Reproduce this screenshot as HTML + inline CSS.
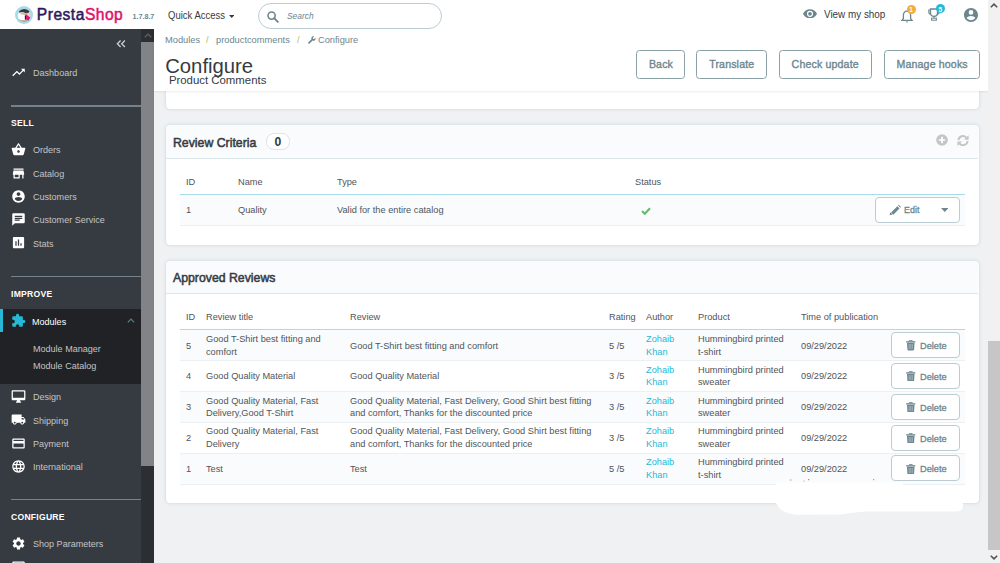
<!DOCTYPE html>
<html><head><meta charset="utf-8"><title>Configure - Product Comments</title>
<style>
html,body{margin:0;padding:0;width:1000px;height:563px;overflow:hidden;background:#eff1f2;font-family:"Liberation Sans",sans-serif;}
.r{position:absolute;box-sizing:content-box;}
.t{position:absolute;white-space:nowrap;}
</style></head><body>
<div class="r" style="left:153.5px;top:29px;width:834px;height:534px;background:#eff1f2;"></div>
<div class="r" style="left:0px;top:0px;width:987.5px;height:29px;background:#fff;"></div>
<svg class="r" style="left:15.1px;top:5.8px" width="18" height="18" viewBox="0 0 18 18">
<defs><clipPath id="lc"><circle cx="9.3" cy="9.4" r="6.5"/></clipPath></defs>
<circle cx="9" cy="9" r="9" fill="#a8dbe8"/>
<g clip-path="url(#lc)">
<rect x="0" y="0" width="18" height="18" fill="#d6d6d6"/>
<ellipse cx="9" cy="4.6" rx="6.2" ry="2.9" fill="#3a3b3d"/>
<path d="M2.8 8 C5 5.8 9 6 10.8 7.6 L10.6 14.6 L2.5 14.6 Z" fill="#ffffff"/>
<path d="M5.5 7.2 C7.2 6.4 9.4 6.7 10.6 7.8 L10.2 9.2 C8.8 8.4 7 8.3 5.6 8.6 Z" fill="#bdbdbd"/>
<path d="M10.4 7.1 L11.8 6.8 L11.6 9.4 L10.5 9.6 Z" fill="#f0b43c"/>
<path d="M10.6 8 L15.6 11.8 L13 14.6 L10.4 13.2 Z" fill="#e5177b"/>
<path d="M9.8 9.6 L10.9 9.4 L11 13.6 L9.9 13.8 Z" fill="#1e1e1e"/>
<rect x="2" y="14.2" width="14" height="4" fill="#bda486"/>
<circle cx="4.4" cy="14.3" r="0.9" fill="#333"/><circle cx="13.8" cy="14.3" r="0.9" fill="#333"/>
</g>
</svg>
<div class="t" style="left:36.8px;top:5.05px;font-size:15.6px;line-height:20.28px;color:#363a41;letter-spacing:0.5px;"><span style="color:#2a1a5e;-webkit-text-stroke:0.5px #2a1a5e">Presta</span><span style="color:#e0106c;-webkit-text-stroke:0.5px #e0106c">Shop</span></div>
<div class="t" style="left:132.4px;top:12.33px;font-size:7.2px;line-height:9.36px;color:#6c868e;font-weight:700;">1.7.8.7</div>
<div class="t" style="left:168.1px;top:8.67px;font-size:10.165px;line-height:13.21px;color:#363a41;transform:scaleX(0.9346);transform-origin:0 0;">Quick Access</div>
<svg class="r" style="left:228.5px;top:14.5px" width="5.5" height="3"><path d="M0 0 L5.5 0 L2.75 3 Z" fill="#363a41"/></svg>
<div class="r" style="left:258px;top:3px;width:181.5px;height:23.5px;border:1px solid #bbcdd2;border-radius:13px;background:#fff"></div>
<svg class="r" style="left:267px;top:10.5px" width="12" height="12" viewBox="0 0 12 12">
<circle cx="4.6" cy="4.6" r="3.6" fill="none" stroke="#6c868e" stroke-width="1.6"/>
<path d="M7.2 7.2 L10.8 10.8" stroke="#6c868e" stroke-width="1.9" stroke-linecap="round"/></svg>
<div class="t" style="left:287px;top:11.43px;font-size:8.4px;line-height:10.92px;color:#6c868e;font-style:italic;">Search</div>
<svg class="r" style="left:802.7px;top:8.6px" width="14" height="9.6" viewBox="0 0 24 16">
<path d="M12 0 C6.5 0 2 3.5 0 8 C2 12.5 6.5 16 12 16 C17.5 16 22 12.5 24 8 C22 3.5 17.5 0 12 0 Z M12 13.3 A5.3 5.3 0 1 1 12 2.7 A5.3 5.3 0 1 1 12 13.3 Z M12 4.8 A3.2 3.2 0 1 0 12 11.2 A3.2 3.2 0 1 0 12 4.8 Z" fill="#6c868e"/></svg>
<div class="t" style="left:823.6px;top:8.44px;font-size:10.593px;line-height:13.77px;color:#363a41;transform:scaleX(0.9346);transform-origin:0 0;">View my shop</div>
<svg class="r" style="left:900.5px;top:9.5px" width="12" height="13" viewBox="0 0 12 13">
<path d="M6 1.2 C3.6 1.2 2.4 3 2.4 5.2 L2.4 8.6 L1 10.3 L11 10.3 L9.6 8.6 L9.6 5.2 C9.6 3 8.4 1.2 6 1.2 Z" fill="none" stroke="#6c868e" stroke-width="1.3"/>
<path d="M4.6 11.6 A1.5 1.5 0 0 0 7.4 11.6 Z" fill="#6c868e"/></svg>
<div class="r" style="left:906.5px;top:4.5px;width:9px;height:9px;border-radius:50%;background:#f0ae40"></div>
<div class="t" style="left:909.3px;top:6.22px;font-size:6.5px;line-height:8.45px;color:#fff;font-weight:700;">1</div>
<svg class="r" style="left:927.5px;top:8px" width="12" height="13" viewBox="0 0 12 13">
<path d="M2.5 1 L9.5 1 L9.5 5 C9.5 7.2 8 8.3 6 8.3 C4 8.3 2.5 7.2 2.5 5 Z" fill="none" stroke="#6c868e" stroke-width="1.3"/>
<path d="M2.5 2 L0.8 2 L0.8 4 C0.8 5.3 1.8 6 2.8 6 M9.5 2 L11.2 2 L11.2 4 C11.2 5.3 10.2 6 9.2 6" fill="none" stroke="#6c868e" stroke-width="1.1"/>
<path d="M6 8.3 L6 9.8" stroke="#6c868e" stroke-width="1.3"/><rect x="3.6" y="10.2" width="4.8" height="2" fill="none" stroke="#6c868e" stroke-width="1"/></svg>
<div class="r" style="left:936px;top:4px;width:9px;height:9px;border-radius:50%;background:#25b9d7"></div>
<div class="t" style="left:938.6px;top:5.72px;font-size:6.5px;line-height:8.45px;color:#fff;font-weight:700;">5</div>
<svg class="r" style="left:963.5px;top:7.7px" width="14" height="14" viewBox="0 0 24 24">
<path d="M12 0 C5.4 0 0 5.4 0 12 C0 18.6 5.4 24 12 24 C18.6 24 24 18.6 24 12 C24 5.4 18.6 0 12 0 Z M12 3.6 A4 4 0 1 1 12 11.6 A4 4 0 1 1 12 3.6 Z M12 21 C9 21 6.3 19.5 4.7 17.2 C4.8 14.8 9.5 13.5 12 13.5 C14.5 13.5 19.2 14.8 19.3 17.2 C17.7 19.5 15 21 12 21 Z" fill="#6c868e"/></svg>
<div class="r" style="left:0px;top:29px;width:153.5px;height:534px;background:#363a41;"></div>
<div class="r" style="left:141px;top:29px;width:12.5px;height:534px;background:#2b2e33;"></div>
<div class="r" style="left:141px;top:41.6px;width:12.5px;height:424px;background:#818386;"></div>
<svg class="r" style="left:143.5px;top:32.5px" width="8" height="5" viewBox="0 0 8 5"><path d="M0.8 4.3 L4 1.1 L7.2 4.3" fill="none" stroke="#5f6266" stroke-width="1.3"/></svg>
<svg class="r" style="left:116px;top:40.3px" width="10" height="8" viewBox="0 0 10 8"><path d="M4.6 0.6 L1.4 3.8 L4.6 7 M8.9 0.6 L5.7 3.8 L8.9 7" fill="none" stroke="#c9cacb" stroke-width="1.4"/></svg>
<svg class="r" style="left:10.5px;top:65px" width="15" height="15" viewBox="0 0 24 24"><path d="M16 6l2.29 2.29-4.88 4.88-4-4L2 16.59 3.41 18l6-6 4 4 6.3-6.29L22 12V6z" fill="#fff"/></svg>
<div class="t" style="left:32.8px;top:67.35px;font-size:9.684px;line-height:12.59px;color:#c4c5c7;transform:scaleX(0.9346);transform-origin:0 0;">Dashboard</div>
<div class="r" style="left:11px;top:105.2px;width:130px;height:1.5px;background:#74828a;"></div>
<div class="t" style="left:11px;top:117.63px;font-size:8.6px;line-height:11.18px;color:#fff;font-weight:700;letter-spacing:0.25px;">SELL</div>
<svg class="r" style="left:10.5px;top:142.20000000000002px" width="15" height="15" viewBox="0 0 24 24"><path d="M17.21 9l-4.38-6.56c-.19-.28-.51-.42-.83-.42-.32 0-.64.14-.83.43L6.79 9H2c-.55 0-1 .45-1 1 0 .09.01.18.04.27l2.54 9.27c.23.84 1 1.46 1.92 1.46h13c.92 0 1.69-.62 1.93-1.46l2.54-9.27L23 10c0-.55-.45-1-1-1h-4.79zM9 9l3-4.4L15 9H9zm3 8c-1.1 0-2-.9-2-2s.9-2 2-2 2 .9 2 2-.9 2-2 2z" fill="#fff"/></svg>
<div class="t" style="left:32.8px;top:144.45px;font-size:9.684px;line-height:12.59px;color:#c4c5c7;transform:scaleX(0.9346);transform-origin:0 0;">Orders</div>
<svg class="r" style="left:10.5px;top:165.50000000000003px" width="15" height="15" viewBox="0 0 24 24"><path d="M20 4H4v2h16V4zm1 10v-2l-1-5H4l-1 5v2h1v6h10v-6h4v6h2v-6h1zm-9 4H6v-4h6v4z" fill="#fff"/></svg>
<div class="t" style="left:32.8px;top:167.75px;font-size:9.684px;line-height:12.59px;color:#c4c5c7;transform:scaleX(0.9346);transform-origin:0 0;">Catalog</div>
<svg class="r" style="left:10.5px;top:188.8px" width="15" height="15" viewBox="0 0 24 24"><path d="M12 2C6.48 2 2 6.48 2 12s4.48 10 10 10 10-4.48 10-10S17.52 2 12 2zm0 3c1.66 0 3 1.34 3 3s-1.34 3-3 3-3-1.34-3-3 1.34-3 3-3zm0 14.2c-2.5 0-4.71-1.28-6-3.22.03-1.990 4-3.08 6-3.08 1.99 0 5.970 1.09 6 3.08-1.29 1.94-3.5 3.22-6 3.22z" fill="#fff"/></svg>
<div class="t" style="left:32.8px;top:191.05px;font-size:9.684px;line-height:12.59px;color:#c4c5c7;transform:scaleX(0.9346);transform-origin:0 0;">Customers</div>
<svg class="r" style="left:10.5px;top:212.10000000000002px" width="15" height="15" viewBox="0 0 24 24"><path d="M20 2H4c-1.1 0-1.99.9-1.99 2L2 22l4-4h14c1.1 0 2-.9 2-2V4c0-1.1-.9-2-2-2zM6 9h12v2H6V9zm8 5H6v-2h8v2zm4-6H6V6h12v2z" fill="#fff"/></svg>
<div class="t" style="left:32.8px;top:214.35px;font-size:9.684px;line-height:12.59px;color:#c4c5c7;transform:scaleX(0.9346);transform-origin:0 0;">Customer Service</div>
<svg class="r" style="left:10.5px;top:235.4px" width="15" height="15" viewBox="0 0 24 24"><path d="M19 3H5c-1.1 0-2 .9-2 2v14c0 1.1.9 2 2 2h14c1.1 0 2-.9 2-2V5c0-1.1-.9-2-2-2zM9 17H7v-7h2v7zm4 0h-2V7h2v10zm4 0h-2v-4h2v4z" fill="#fff"/></svg>
<div class="t" style="left:32.8px;top:237.65px;font-size:9.684px;line-height:12.59px;color:#c4c5c7;transform:scaleX(0.9346);transform-origin:0 0;">Stats</div>
<div class="r" style="left:11px;top:275.7px;width:130px;height:1.5px;background:#74828a;"></div>
<div class="t" style="left:11px;top:288.53px;font-size:8.6px;line-height:11.18px;color:#fff;font-weight:700;letter-spacing:0.25px;">IMPROVE</div>
<div class="r" style="left:0px;top:308.9px;width:141px;height:74.7px;background:#202226;"></div>
<div class="r" style="left:0px;top:308.9px;width:3px;height:23.1px;background:#25b9d7;"></div>
<svg class="r" style="left:10.5px;top:313.3px" width="15" height="15" viewBox="0 0 24 24"><path d="M20.5 11H19V7c0-1.1-.9-2-2-2h-4V3.5C13 2.12 11.88 1 10.5 1S8 2.12 8 3.5V5H4c-1.1 0-1.99.9-1.99 2v3.8H3.5c1.49 0 2.7 1.210 2.7 2.7s-1.21 2.7-2.7 2.7H2V20c0 1.1.9 2 2 2h3.8v-1.5c0-1.49 1.21-2.7 2.7-2.7 1.49 0 2.7 1.21 2.7 2.7V22H17c1.1 0 2-.9 2-2v-4h1.5c1.38 0 2.5-1.12 2.5-2.5S21.88 11 20.5 11z" fill="#25b9d7"/></svg>
<div class="t" style="left:32px;top:315.55px;font-size:9.684px;line-height:12.59px;color:#fff;transform:scaleX(0.9346);transform-origin:0 0;">Modules</div>
<svg class="r" style="left:126.5px;top:318px" width="8" height="5" viewBox="0 0 8 5"><path d="M0.8 4.3 L4 1.1 L7.2 4.3" fill="none" stroke="#5d7f88" stroke-width="1.2"/></svg>
<div class="t" style="left:32.8px;top:343.15px;font-size:9.684px;line-height:12.59px;color:#c4c5c7;transform:scaleX(0.9346);transform-origin:0 0;">Module Manager</div>
<div class="t" style="left:32.8px;top:360.35px;font-size:9.684px;line-height:12.59px;color:#c4c5c7;transform:scaleX(0.9346);transform-origin:0 0;">Module Catalog</div>
<svg class="r" style="left:10.5px;top:388.9px" width="15" height="15" viewBox="0 0 24 24"><path d="M21 2H3c-1.1 0-2 .9-2 2v12c0 1.1.9 2 2 2h7l-2 3v1h8v-1l-2-3h7c1.1 0 2-.9 2-2V4c0-1.1-.9-2-2-2zm0 12H3V4h18v10z" fill="#fff"/></svg>
<div class="t" style="left:32.8px;top:391.15px;font-size:9.684px;line-height:12.59px;color:#c4c5c7;transform:scaleX(0.9346);transform-origin:0 0;">Design</div>
<svg class="r" style="left:10.5px;top:412.25px" width="15" height="15" viewBox="0 0 24 24"><path d="M20 8h-3V4H3c-1.1 0-2 .9-2 2v11h2c0 1.66 1.34 3 3 3s3-1.34 3-3h6c0 1.66 1.34 3 3 3s3-1.34 3-3h2v-5l-3-4zM6 18.5c-.83 0-1.5-.67-1.5-1.5s.67-1.5 1.5-1.5 1.5.67 1.5 1.5-.67 1.5-1.5 1.5zm13.5-9l1.96 2.5H17V9.5h2.5zm-1.5 9c-.83 0-1.5-.67-1.5-1.5s.67-1.5 1.5-1.5 1.5.67 1.5 1.5-.67 1.5-1.5 1.5z" fill="#fff"/></svg>
<div class="t" style="left:32.8px;top:414.50px;font-size:9.684px;line-height:12.59px;color:#c4c5c7;transform:scaleX(0.9346);transform-origin:0 0;">Shipping</div>
<svg class="r" style="left:10.5px;top:435.59999999999997px" width="15" height="15" viewBox="0 0 24 24"><path d="M20 4H4c-1.11 0-1.99.89-1.99 2L2 18c0 1.11.89 2 2 2h16c1.11 0 2-.89 2-2V6c0-1.11-.89-2-2-2zm0 14H4v-6h16v6zm0-10H4V6h16v2z" fill="#fff"/></svg>
<div class="t" style="left:32.8px;top:437.85px;font-size:9.684px;line-height:12.59px;color:#c4c5c7;transform:scaleX(0.9346);transform-origin:0 0;">Payment</div>
<svg class="r" style="left:10.5px;top:458.95px" width="15" height="15" viewBox="0 0 24 24"><path d="M11.99 2C6.47 2 2 6.48 2 12s4.47 10 9.99 10C17.52 22 22 17.52 22 12S17.52 2 11.99 2zm6.93 6h-2.95c-.32-1.25-.78-2.45-1.38-3.56 1.84.63 3.37 1.91 4.33 3.56zM12 4.04c.83 1.2 1.48 2.53 1.91 3.96h-3.820c.43-1.43 1.08-2.76 1.91-3.96zM4.26 14C4.1 13.36 4 12.69 4 12s.1-1.36.26-2h3.38c-.08.66-.14 1.32-.14 2 0 .68.06 1.34.14 2H4.26zm.82 2h2.95c.32 1.25.78 2.45 1.38 3.56-1.84-.63-3.37-1.9-4.33-3.56zm2.95-8H5.08c.96-1.66 2.49-2.93 4.33-3.56C8.81 5.55 8.35 6.75 8.03 8zM12 19.96c-.83-1.2-1.48-2.53-1.91-3.96h3.82c-.43 1.43-1.08 2.76-1.91 3.96zM14.34 14H9.66c-.09-.66-.16-1.32-.16-2 0-.68.07-1.35.16-2h4.68c.09.65.16 1.32.16 2 0 .68-.07 1.34-.16 2zm.25 5.56c.6-1.11 1.06-2.31 1.38-3.56h2.95c-.96 1.65-2.49 2.93-4.33 3.56zM16.36 14c.08-.66.14-1.320.14-2 0-.68-.06-1.34-.14-2h3.38c.16.64.26 1.31.26 2s-.1 1.36-.26 2h-3.38z" fill="#fff"/></svg>
<div class="t" style="left:32.8px;top:461.20px;font-size:9.684px;line-height:12.59px;color:#c4c5c7;transform:scaleX(0.9346);transform-origin:0 0;">International</div>
<div class="r" style="left:11px;top:498.7px;width:130px;height:1.5px;background:#74828a;"></div>
<div class="t" style="left:11px;top:511.73px;font-size:8.6px;line-height:11.18px;color:#fff;font-weight:700;letter-spacing:0.25px;">CONFIGURE</div>
<svg class="r" style="left:10.5px;top:536px" width="15" height="15" viewBox="0 0 24 24"><path d="M19.14 12.94c.04-.3.06-.61.06-.94 0-.32-.02-.64-.07-.94l2.03-1.58c.18-.14.23-.41.12-.61l-1.92-3.32c-.12-.22-.37-.29-.59-.22l-2.39.96c-.5-.38-1.03-.7-1.62-.94l-.36-2.54c-.04-.24-.24-.41-.48-.41h-3.84c-.24 0-.43.17-.47.41l-.36 2.54c-.59.24-1.13.57-1.62.94l-2.39-.96c-.22-.08-.47 0-.59.22L2.74 8.87c-.12.21-.08.47.12.61l2.03 1.58c-.05.3-.09.63-.09.94s.02.64.07.94l-2.03 1.58c-.18.14-.23.41-.12.61l1.92 3.32c.12.22.37.29.59.22l2.39-.96c.5.38 1.03.7 1.62.94l.36 2.54c.05.24.24.41.48.41h3.84c.24 0 .44-.17.47-.41l.36-2.54c.59-.24 1.130-.56 1.62-.94l2.39.96c.22.08.47 0 .59-.22l1.92-3.32c.12-.22.07-.47-.12-.61l-2.01-1.58zM12 15.6c-1.98 0-3.6-1.62-3.6-3.6s1.62-3.6 3.6-3.6 3.6 1.62 3.6 3.6-1.62 3.6-3.6 3.6z" fill="#fff"/></svg>
<div class="t" style="left:32.8px;top:538.35px;font-size:9.684px;line-height:12.59px;color:#c4c5c7;transform:scaleX(0.9346);transform-origin:0 0;">Shop Parameters</div>
<svg class="r" style="left:10.5px;top:559px" width="15" height="15" viewBox="0 0 24 24"><path d="M20 4H4c-1.11 0-1.99.89-1.99 2L2 18c0 1.11.89 2 2 2h16c1.11 0 2-.89 2-2V6c0-1.11-.89-2-2-2zm0 14H4v-6h16v6zm0-10H4V6h16v2z" fill="#fff"/></svg>
<div class="r" style="left:165.3px;top:40px;width:812.3px;height:68.2px;border:1px solid #dbe6e9;border-radius:5px;background:#fff;box-shadow:0 0 4px rgba(0,0,0,0.06)"></div>
<div class="r" style="left:153.5px;top:29px;width:834px;height:62px;background:#fff;box-shadow:0 1px 2px rgba(0,0,0,0.07);"></div>
<div class="t" style="left:164.8px;top:33.78px;font-size:9.951px;line-height:12.94px;color:#6c868e;transform:scaleX(0.9346);transform-origin:0 0;">Modules</div>
<div class="t" style="left:206.3px;top:33.78px;font-size:9.951px;line-height:12.94px;color:#a4c45c;transform:scaleX(0.9346);transform-origin:0 0;">/</div>
<div class="t" style="left:216px;top:33.78px;font-size:9.951px;line-height:12.94px;color:#6c868e;transform:scaleX(0.9346);transform-origin:0 0;">productcomments</div>
<div class="t" style="left:296.6px;top:33.78px;font-size:9.951px;line-height:12.94px;color:#a4c45c;transform:scaleX(0.9346);transform-origin:0 0;">/</div>
<svg class="r" style="left:308px;top:36px" width="8" height="8" viewBox="0 0 16 16">
<path d="M15 3.5 L12.3 6.2 L9.8 6.2 L9.8 3.7 L12.5 1 C10.5 0.2 8 0.8 7 2.8 C6.3 4.2 6.5 5.5 7 6.5 L0.8 12.7 C0.2 13.3 0.2 14.4 0.8 15 C1.4 15.6 2.5 15.6 3.1 15 L9.3 8.8 C10.4 9.4 11.8 9.5 13.1 8.8 C15 7.8 15.6 5.5 15 3.5 Z" fill="#6c868e"/></svg>
<div class="t" style="left:317.8px;top:33.78px;font-size:9.951px;line-height:12.94px;color:#6c868e;transform:scaleX(0.9346);transform-origin:0 0;">Configure</div>
<div class="t" style="left:165.2px;top:52.97px;font-size:20.3px;line-height:26.39px;color:#363a41;">Configure</div>
<div class="t" style="left:168.9px;top:72.74px;font-size:11.4px;line-height:14.82px;color:#363a41;">Product Comments</div>
<div class="r" style="left:636.1px;top:49.8px;width:46.6px;height:26.8px;border:1px solid #8aa0a7;border-radius:3.5px;background:#fff"></div>
<div class="r" style="left:696.4px;top:49.8px;width:68.4px;height:26.8px;border:1px solid #8aa0a7;border-radius:3.5px;background:#fff"></div>
<div class="r" style="left:779.2px;top:49.8px;width:90.4px;height:26.8px;border:1px solid #8aa0a7;border-radius:3.5px;background:#fff"></div>
<div class="r" style="left:883.8px;top:49.8px;width:94.3px;height:26.8px;border:1px solid #8aa0a7;border-radius:3.5px;background:#fff"></div>
<div class="t" style="left:648.9px;top:57.94px;font-size:10.6px;line-height:13.78px;color:#6c868e;-webkit-text-stroke:0.35px currentColor;letter-spacing:0.15px;">Back</div>
<div class="t" style="left:709.2px;top:57.94px;font-size:10.6px;line-height:13.78px;color:#6c868e;-webkit-text-stroke:0.35px currentColor;letter-spacing:0.15px;">Translate</div>
<div class="t" style="left:791.6px;top:57.94px;font-size:10.6px;line-height:13.78px;color:#6c868e;-webkit-text-stroke:0.35px currentColor;letter-spacing:0.15px;">Check update</div>
<div class="t" style="left:896.5px;top:57.94px;font-size:10.6px;line-height:13.78px;color:#6c868e;-webkit-text-stroke:0.35px currentColor;letter-spacing:0.15px;">Manage hooks</div>
<div class="r" style="left:165.3px;top:124px;width:812.3px;height:120.19999999999999px;border:1px solid #dbe6e9;border-radius:5px;background:#fff;box-shadow:0 0 4px rgba(0,0,0,0.06)"></div>
<div class="r" style="left:166.3px;top:125px;width:811.7px;height:32.69999999999999px;border-bottom:1px solid #dbe6e9;border-radius:4px 4px 0 0;background:#fafbfc"></div>
<div class="t" style="left:173.2px;top:133.75px;font-size:13.5px;line-height:17.55px;color:#363a41;-webkit-text-stroke:0.55px currentColor;transform:scaleX(0.91);transform-origin:0 0;">Review Criteria</div>
<div class="r" style="left:266.2px;top:132.8px;width:21.8px;height:15.2px;border:1px solid #dbe6e9;border-radius:8px;background:#fff"></div>
<div class="t" style="left:274.4px;top:135.44px;font-size:12.2px;line-height:15.86px;color:#363a41;font-weight:700;">0</div>
<svg class="r" style="left:935.6px;top:134.2px" width="12" height="12" viewBox="0 0 12 12"><circle cx="6" cy="6" r="5.8" fill="#c5c5c5"/><path d="M6 2.8 V9.2 M2.8 6 H9.2" stroke="#fff" stroke-width="1.7"/></svg>
<svg class="r" style="left:957.3px;top:134.8px" width="12" height="11.2" viewBox="0 0 12 11.2"><path d="M1.4 5.2 A4.5 4.5 0 0 1 9.3 2.6" fill="none" stroke="#c5c5c5" stroke-width="1.9"/><path d="M11.6 0.2 L11.6 4.8 L7 4.8 Z" fill="#c5c5c5"/><path d="M10.6 6 A4.5 4.5 0 0 1 2.7 8.6" fill="none" stroke="#c5c5c5" stroke-width="1.9"/><path d="M0.4 11 L0.4 6.4 L5 6.4 Z" fill="#c5c5c5"/></svg>
<div class="t" style="left:186.1px;top:176.44px;font-size:9.898px;line-height:12.87px;color:#50555b;transform:scaleX(0.9346);transform-origin:0 0;">ID</div>
<div class="t" style="left:238.2px;top:176.44px;font-size:9.898px;line-height:12.87px;color:#50555b;transform:scaleX(0.9346);transform-origin:0 0;">Name</div>
<div class="t" style="left:337px;top:176.44px;font-size:9.898px;line-height:12.87px;color:#50555b;transform:scaleX(0.9346);transform-origin:0 0;">Type</div>
<div class="t" style="left:635.3px;top:176.44px;font-size:9.898px;line-height:12.87px;color:#50555b;transform:scaleX(0.9346);transform-origin:0 0;">Status</div>
<div class="r" style="left:180.2px;top:193.8px;width:784.4px;height:1.4px;background:#a9dbea;"></div>
<div class="r" style="left:180.2px;top:195.2px;width:784.4px;height:30.2px;background:#f9fbfc;"></div>
<div class="r" style="left:180.2px;top:225px;width:784.4px;height:1px;background:#ebf0f2;"></div>
<div class="t" style="left:186.1px;top:203.84px;font-size:9.898px;line-height:12.87px;color:#50555b;transform:scaleX(0.9346);transform-origin:0 0;">1</div>
<div class="t" style="left:237.7px;top:203.84px;font-size:9.898px;line-height:12.87px;color:#50555b;transform:scaleX(0.9346);transform-origin:0 0;">Quality</div>
<div class="t" style="left:337px;top:203.84px;font-size:9.898px;line-height:12.87px;color:#50555b;transform:scaleX(0.9346);transform-origin:0 0;">Valid for the entire catalog</div>
<svg class="r" style="left:640.5px;top:206.5px" width="10" height="8" viewBox="0 0 10 8"><path d="M1 4 L3.8 6.8 L9 1.2" fill="none" stroke="#62bb6b" stroke-width="2"/></svg>
<div class="r" style="left:875.2px;top:197px;width:83px;height:23.5px;border:1px solid #bbcdd2;border-radius:4px;background:#fff"></div>
<svg class="r" style="left:889px;top:204px" width="12" height="11.5" viewBox="0 0 12 11.5"><path d="M3.2 9.6 L9.4 3.4" stroke="#6c868e" stroke-width="3"/><path d="M10.2 2.6 L10.9 1.9" stroke="#6c868e" stroke-width="3"/><path d="M0.6 11.2 L1.2 8.2 L3.6 10.6 Z" fill="#6c868e"/></svg>
<div class="t" style="left:903.5px;top:204.23px;font-size:9.7px;line-height:12.61px;color:#6c868e;-webkit-text-stroke:0.3px currentColor;transform:scaleX(0.92);transform-origin:0 0;">Edit</div>
<svg class="r" style="left:940.5px;top:208px" width="7.5" height="4"><path d="M0 0 H7.5 L3.75 4 Z" fill="#6c868e"/></svg>
<div class="r" style="left:165.3px;top:260px;width:812.3px;height:242.3px;border:1px solid #dbe6e9;border-radius:5px;background:#fff;box-shadow:0 0 4px rgba(0,0,0,0.06)"></div>
<div class="r" style="left:166.3px;top:261px;width:811.7px;height:31.69999999999999px;border-bottom:1px solid #dbe6e9;border-radius:4px 4px 0 0;background:#fafbfc"></div>
<div class="t" style="left:173px;top:268.85px;font-size:13.5px;line-height:17.55px;color:#363a41;-webkit-text-stroke:0.55px currentColor;transform:scaleX(0.91);transform-origin:0 0;">Approved Reviews</div>
<div class="t" style="left:186.0px;top:311.14px;font-size:9.898px;line-height:12.87px;color:#50555b;transform:scaleX(0.9346);transform-origin:0 0;">ID</div>
<div class="t" style="left:206.0px;top:311.14px;font-size:9.898px;line-height:12.87px;color:#50555b;transform:scaleX(0.9346);transform-origin:0 0;">Review title</div>
<div class="t" style="left:349.9px;top:311.14px;font-size:9.898px;line-height:12.87px;color:#50555b;transform:scaleX(0.9346);transform-origin:0 0;">Review</div>
<div class="t" style="left:609.0px;top:311.14px;font-size:9.898px;line-height:12.87px;color:#50555b;transform:scaleX(0.9346);transform-origin:0 0;">Rating</div>
<div class="t" style="left:646.3px;top:311.14px;font-size:9.898px;line-height:12.87px;color:#50555b;transform:scaleX(0.9346);transform-origin:0 0;">Author</div>
<div class="t" style="left:697.9px;top:311.14px;font-size:9.898px;line-height:12.87px;color:#50555b;transform:scaleX(0.9346);transform-origin:0 0;">Product</div>
<div class="t" style="left:801.3px;top:311.14px;font-size:9.898px;line-height:12.87px;color:#50555b;transform:scaleX(0.9346);transform-origin:0 0;">Time of publication</div>
<div class="r" style="left:180.2px;top:328.8px;width:784.4px;height:1.4px;background:#a9dbea;"></div>
<div class="r" style="left:180.2px;top:330.2px;width:784.4px;height:30.69999999999999px;background:#f9fbfc;"></div>
<div class="r" style="left:180.2px;top:360.4px;width:784.4px;height:1px;background:#ebf0f2;"></div>
<div class="t" style="left:185.5px;top:339.79px;font-size:9.898px;line-height:12.87px;color:#50555b;transform:scaleX(0.9346);transform-origin:0 0;">5</div>
<div class="t" style="left:206.0px;top:332.99px;font-size:9.898px;line-height:12.87px;color:#50555b;transform:scaleX(0.9346);transform-origin:0 0;">Good T-Shirt best fitting and</div>
<div class="t" style="left:206.0px;top:345.69px;font-size:9.898px;line-height:12.87px;color:#50555b;transform:scaleX(0.9346);transform-origin:0 0;">comfort</div>
<div class="t" style="left:349.9px;top:339.79px;font-size:9.898px;line-height:12.87px;color:#50555b;transform:scaleX(0.9346);transform-origin:0 0;">Good T-Shirt best fitting and comfort</div>
<div class="t" style="left:609.0px;top:339.79px;font-size:9.898px;line-height:12.87px;color:#50555b;transform:scaleX(0.9346);transform-origin:0 0;">5 /5</div>
<div class="t" style="left:646.3px;top:332.99px;font-size:9.898px;line-height:12.87px;color:#25b9d7;transform:scaleX(0.9346);transform-origin:0 0;">Zohaib</div>
<div class="t" style="left:646.3px;top:345.69px;font-size:9.898px;line-height:12.87px;color:#25b9d7;transform:scaleX(0.9346);transform-origin:0 0;">Khan</div>
<div class="t" style="left:697.9px;top:332.99px;font-size:9.898px;line-height:12.87px;color:#50555b;transform:scaleX(0.9346);transform-origin:0 0;">Hummingbird printed</div>
<div class="t" style="left:697.9px;top:345.69px;font-size:9.898px;line-height:12.87px;color:#50555b;transform:scaleX(0.9346);transform-origin:0 0;">t-shirt</div>
<div class="t" style="left:801.3px;top:339.79px;font-size:9.898px;line-height:12.87px;color:#50555b;transform:scaleX(0.9346);transform-origin:0 0;">09/29/2022</div>
<div class="r" style="left:891.4px;top:332.1px;width:66.3px;height:24px;border:1px solid #bbcdd2;border-radius:4px;background:#fff"></div>
<svg class="r" style="left:906px;top:340.2px" width="9.5" height="10.5" viewBox="0 0 9.5 10.5"><path d="M3.3 1.2 V0.4 H6.2 V1.2" fill="none" stroke="#6c868e" stroke-width="0.9"/><rect x="0.2" y="1.2" width="9.1" height="1.4" fill="#6c868e"/><path d="M1 3 H8.5 L8.1 9.6 Q8 10.4 7.2 10.4 H2.3 Q1.5 10.4 1.4 9.6 Z" fill="#6c868e"/><path d="M3.2 4 V9.2 M4.75 4 V9.2 M6.3 4 V9.2" stroke="#c5d1d5" stroke-width="0.6"/></svg>
<div class="t" style="left:920.3px;top:340.18px;font-size:9.7px;line-height:12.61px;color:#6c868e;-webkit-text-stroke:0.3px currentColor;transform:scaleX(0.95);transform-origin:0 0;">Delete</div>
<div class="r" style="left:180.2px;top:391.1px;width:784.4px;height:1px;background:#ebf0f2;"></div>
<div class="t" style="left:185.5px;top:370.49px;font-size:9.898px;line-height:12.87px;color:#50555b;transform:scaleX(0.9346);transform-origin:0 0;">4</div>
<div class="t" style="left:206.0px;top:370.49px;font-size:9.898px;line-height:12.87px;color:#50555b;transform:scaleX(0.9346);transform-origin:0 0;">Good Quality Material</div>
<div class="t" style="left:349.9px;top:370.49px;font-size:9.898px;line-height:12.87px;color:#50555b;transform:scaleX(0.9346);transform-origin:0 0;">Good Quality Material</div>
<div class="t" style="left:609.0px;top:370.49px;font-size:9.898px;line-height:12.87px;color:#50555b;transform:scaleX(0.9346);transform-origin:0 0;">3 /5</div>
<div class="t" style="left:646.3px;top:363.69px;font-size:9.898px;line-height:12.87px;color:#25b9d7;transform:scaleX(0.9346);transform-origin:0 0;">Zohaib</div>
<div class="t" style="left:646.3px;top:376.39px;font-size:9.898px;line-height:12.87px;color:#25b9d7;transform:scaleX(0.9346);transform-origin:0 0;">Khan</div>
<div class="t" style="left:697.9px;top:363.69px;font-size:9.898px;line-height:12.87px;color:#50555b;transform:scaleX(0.9346);transform-origin:0 0;">Hummingbird printed</div>
<div class="t" style="left:697.9px;top:376.39px;font-size:9.898px;line-height:12.87px;color:#50555b;transform:scaleX(0.9346);transform-origin:0 0;">sweater</div>
<div class="t" style="left:801.3px;top:370.49px;font-size:9.898px;line-height:12.87px;color:#50555b;transform:scaleX(0.9346);transform-origin:0 0;">09/29/2022</div>
<div class="r" style="left:891.4px;top:362.8px;width:66.3px;height:24px;border:1px solid #bbcdd2;border-radius:4px;background:#fff"></div>
<svg class="r" style="left:906px;top:370.9px" width="9.5" height="10.5" viewBox="0 0 9.5 10.5"><path d="M3.3 1.2 V0.4 H6.2 V1.2" fill="none" stroke="#6c868e" stroke-width="0.9"/><rect x="0.2" y="1.2" width="9.1" height="1.4" fill="#6c868e"/><path d="M1 3 H8.5 L8.1 9.6 Q8 10.4 7.2 10.4 H2.3 Q1.5 10.4 1.4 9.6 Z" fill="#6c868e"/><path d="M3.2 4 V9.2 M4.75 4 V9.2 M6.3 4 V9.2" stroke="#c5d1d5" stroke-width="0.6"/></svg>
<div class="t" style="left:920.3px;top:370.88px;font-size:9.7px;line-height:12.61px;color:#6c868e;-webkit-text-stroke:0.3px currentColor;transform:scaleX(0.95);transform-origin:0 0;">Delete</div>
<div class="r" style="left:180.2px;top:391.6px;width:784.4px;height:31.0px;background:#f9fbfc;"></div>
<div class="r" style="left:180.2px;top:422.1px;width:784.4px;height:1px;background:#ebf0f2;"></div>
<div class="t" style="left:185.5px;top:401.34px;font-size:9.898px;line-height:12.87px;color:#50555b;transform:scaleX(0.9346);transform-origin:0 0;">3</div>
<div class="t" style="left:206.0px;top:394.54px;font-size:9.898px;line-height:12.87px;color:#50555b;transform:scaleX(0.9346);transform-origin:0 0;">Good Quality Material, Fast</div>
<div class="t" style="left:206.0px;top:407.24px;font-size:9.898px;line-height:12.87px;color:#50555b;transform:scaleX(0.9346);transform-origin:0 0;">Delivery,Good T-Shirt</div>
<div class="t" style="left:349.9px;top:394.54px;font-size:9.898px;line-height:12.87px;color:#50555b;transform:scaleX(0.9346);transform-origin:0 0;">Good Quality Material, Fast Delivery, Good Shirt best fitting</div>
<div class="t" style="left:349.9px;top:407.24px;font-size:9.898px;line-height:12.87px;color:#50555b;transform:scaleX(0.9346);transform-origin:0 0;">and comfort, Thanks for the discounted price</div>
<div class="t" style="left:609.0px;top:401.34px;font-size:9.898px;line-height:12.87px;color:#50555b;transform:scaleX(0.9346);transform-origin:0 0;">3 /5</div>
<div class="t" style="left:646.3px;top:394.54px;font-size:9.898px;line-height:12.87px;color:#25b9d7;transform:scaleX(0.9346);transform-origin:0 0;">Zohaib</div>
<div class="t" style="left:646.3px;top:407.24px;font-size:9.898px;line-height:12.87px;color:#25b9d7;transform:scaleX(0.9346);transform-origin:0 0;">Khan</div>
<div class="t" style="left:697.9px;top:394.54px;font-size:9.898px;line-height:12.87px;color:#50555b;transform:scaleX(0.9346);transform-origin:0 0;">Hummingbird printed</div>
<div class="t" style="left:697.9px;top:407.24px;font-size:9.898px;line-height:12.87px;color:#50555b;transform:scaleX(0.9346);transform-origin:0 0;">sweater</div>
<div class="t" style="left:801.3px;top:401.34px;font-size:9.898px;line-height:12.87px;color:#50555b;transform:scaleX(0.9346);transform-origin:0 0;">09/29/2022</div>
<div class="r" style="left:891.4px;top:393.5px;width:66.3px;height:24px;border:1px solid #bbcdd2;border-radius:4px;background:#fff"></div>
<svg class="r" style="left:906px;top:401.8px" width="9.5" height="10.5" viewBox="0 0 9.5 10.5"><path d="M3.3 1.2 V0.4 H6.2 V1.2" fill="none" stroke="#6c868e" stroke-width="0.9"/><rect x="0.2" y="1.2" width="9.1" height="1.4" fill="#6c868e"/><path d="M1 3 H8.5 L8.1 9.6 Q8 10.4 7.2 10.4 H2.3 Q1.5 10.4 1.4 9.6 Z" fill="#6c868e"/><path d="M3.2 4 V9.2 M4.75 4 V9.2 M6.3 4 V9.2" stroke="#c5d1d5" stroke-width="0.6"/></svg>
<div class="t" style="left:920.3px;top:401.73px;font-size:9.7px;line-height:12.61px;color:#6c868e;-webkit-text-stroke:0.3px currentColor;transform:scaleX(0.95);transform-origin:0 0;">Delete</div>
<div class="r" style="left:180.2px;top:453.0px;width:784.4px;height:1px;background:#ebf0f2;"></div>
<div class="t" style="left:185.5px;top:432.29px;font-size:9.898px;line-height:12.87px;color:#50555b;transform:scaleX(0.9346);transform-origin:0 0;">2</div>
<div class="t" style="left:206.0px;top:425.49px;font-size:9.898px;line-height:12.87px;color:#50555b;transform:scaleX(0.9346);transform-origin:0 0;">Good Quality Material, Fast</div>
<div class="t" style="left:206.0px;top:438.19px;font-size:9.898px;line-height:12.87px;color:#50555b;transform:scaleX(0.9346);transform-origin:0 0;">Delivery</div>
<div class="t" style="left:349.9px;top:425.49px;font-size:9.898px;line-height:12.87px;color:#50555b;transform:scaleX(0.9346);transform-origin:0 0;">Good Quality Material, Fast Delivery, Good Shirt best fitting</div>
<div class="t" style="left:349.9px;top:438.19px;font-size:9.898px;line-height:12.87px;color:#50555b;transform:scaleX(0.9346);transform-origin:0 0;">and comfort, Thanks for the discounted price</div>
<div class="t" style="left:609.0px;top:432.29px;font-size:9.898px;line-height:12.87px;color:#50555b;transform:scaleX(0.9346);transform-origin:0 0;">3 /5</div>
<div class="t" style="left:646.3px;top:425.49px;font-size:9.898px;line-height:12.87px;color:#25b9d7;transform:scaleX(0.9346);transform-origin:0 0;">Zohaib</div>
<div class="t" style="left:646.3px;top:438.19px;font-size:9.898px;line-height:12.87px;color:#25b9d7;transform:scaleX(0.9346);transform-origin:0 0;">Khan</div>
<div class="t" style="left:697.9px;top:425.49px;font-size:9.898px;line-height:12.87px;color:#50555b;transform:scaleX(0.9346);transform-origin:0 0;">Hummingbird printed</div>
<div class="t" style="left:697.9px;top:438.19px;font-size:9.898px;line-height:12.87px;color:#50555b;transform:scaleX(0.9346);transform-origin:0 0;">sweater</div>
<div class="t" style="left:801.3px;top:432.29px;font-size:9.898px;line-height:12.87px;color:#50555b;transform:scaleX(0.9346);transform-origin:0 0;">09/29/2022</div>
<div class="r" style="left:891.4px;top:424.5px;width:66.3px;height:24px;border:1px solid #bbcdd2;border-radius:4px;background:#fff"></div>
<svg class="r" style="left:906px;top:432.8px" width="9.5" height="10.5" viewBox="0 0 9.5 10.5"><path d="M3.3 1.2 V0.4 H6.2 V1.2" fill="none" stroke="#6c868e" stroke-width="0.9"/><rect x="0.2" y="1.2" width="9.1" height="1.4" fill="#6c868e"/><path d="M1 3 H8.5 L8.1 9.6 Q8 10.4 7.2 10.4 H2.3 Q1.5 10.4 1.4 9.6 Z" fill="#6c868e"/><path d="M3.2 4 V9.2 M4.75 4 V9.2 M6.3 4 V9.2" stroke="#c5d1d5" stroke-width="0.6"/></svg>
<div class="t" style="left:920.3px;top:432.68px;font-size:9.7px;line-height:12.61px;color:#6c868e;-webkit-text-stroke:0.3px currentColor;transform:scaleX(0.95);transform-origin:0 0;">Delete</div>
<div class="r" style="left:180.2px;top:453.5px;width:784.4px;height:30.69999999999999px;background:#f9fbfc;"></div>
<div class="r" style="left:180.2px;top:483.7px;width:784.4px;height:1px;background:#ebf0f2;"></div>
<div class="t" style="left:185.5px;top:463.09px;font-size:9.898px;line-height:12.87px;color:#50555b;transform:scaleX(0.9346);transform-origin:0 0;">1</div>
<div class="t" style="left:206.0px;top:463.09px;font-size:9.898px;line-height:12.87px;color:#50555b;transform:scaleX(0.9346);transform-origin:0 0;">Test</div>
<div class="t" style="left:349.9px;top:463.09px;font-size:9.898px;line-height:12.87px;color:#50555b;transform:scaleX(0.9346);transform-origin:0 0;">Test</div>
<div class="t" style="left:609.0px;top:463.09px;font-size:9.898px;line-height:12.87px;color:#50555b;transform:scaleX(0.9346);transform-origin:0 0;">5 /5</div>
<div class="t" style="left:646.3px;top:456.29px;font-size:9.898px;line-height:12.87px;color:#25b9d7;transform:scaleX(0.9346);transform-origin:0 0;">Zohaib</div>
<div class="t" style="left:646.3px;top:468.99px;font-size:9.898px;line-height:12.87px;color:#25b9d7;transform:scaleX(0.9346);transform-origin:0 0;">Khan</div>
<div class="t" style="left:697.9px;top:456.29px;font-size:9.898px;line-height:12.87px;color:#50555b;transform:scaleX(0.9346);transform-origin:0 0;">Hummingbird printed</div>
<div class="t" style="left:697.9px;top:468.99px;font-size:9.898px;line-height:12.87px;color:#50555b;transform:scaleX(0.9346);transform-origin:0 0;">t-shirt</div>
<div class="t" style="left:801.3px;top:463.09px;font-size:9.898px;line-height:12.87px;color:#50555b;transform:scaleX(0.9346);transform-origin:0 0;">09/29/2022</div>
<div class="r" style="left:891.4px;top:455.4px;width:66.3px;height:24px;border:1px solid #bbcdd2;border-radius:4px;background:#fff"></div>
<svg class="r" style="left:906px;top:463.6px" width="9.5" height="10.5" viewBox="0 0 9.5 10.5"><path d="M3.3 1.2 V0.4 H6.2 V1.2" fill="none" stroke="#6c868e" stroke-width="0.9"/><rect x="0.2" y="1.2" width="9.1" height="1.4" fill="#6c868e"/><path d="M1 3 H8.5 L8.1 9.6 Q8 10.4 7.2 10.4 H2.3 Q1.5 10.4 1.4 9.6 Z" fill="#6c868e"/><path d="M3.2 4 V9.2 M4.75 4 V9.2 M6.3 4 V9.2" stroke="#c5d1d5" stroke-width="0.6"/></svg>
<div class="t" style="left:920.3px;top:463.48px;font-size:9.7px;line-height:12.61px;color:#6c868e;-webkit-text-stroke:0.3px currentColor;transform:scaleX(0.95);transform-origin:0 0;">Delete</div>
<svg class="r" style="left:0;top:0" width="1000" height="563"><path d="M776 482.5 L903 482.5 L903 485.2 L963 485.2 L963 505 Q963 511.5 956 511.5 L866 511.5 Q852 512.5 840 514.5 L797 514.8 Q780 513.5 776 503 Z" fill="#fff"/><rect x="790" y="479.5" width="1.4" height="1" fill="#9aa0a4"/><rect x="803.5" y="480.6" width="1.2" height="1" fill="#b0b5b8"/><rect x="808" y="479" width="1.2" height="1.2" fill="#8d9397"/><rect x="873" y="479" width="1.2" height="1.2" fill="#9aa0a4"/></svg>
<div class="r" style="left:987.5px;top:0px;width:12.5px;height:563px;background:#f1f1f1;"></div>
<div class="r" style="left:987.5px;top:341px;width:12.5px;height:209.2px;background:#c6c6c6;"></div>
<svg class="r" style="left:990px;top:3px" width="8" height="5" viewBox="0 0 8 5"><path d="M0.8 4.3 L4 1.1 L7.2 4.3" fill="none" stroke="#505050" stroke-width="1.5"/></svg>
<svg class="r" style="left:990px;top:554.5px" width="8" height="5" viewBox="0 0 8 5"><path d="M0.8 0.7 L4 3.9 L7.2 0.7" fill="none" stroke="#505050" stroke-width="1.5"/></svg>
</body></html>
